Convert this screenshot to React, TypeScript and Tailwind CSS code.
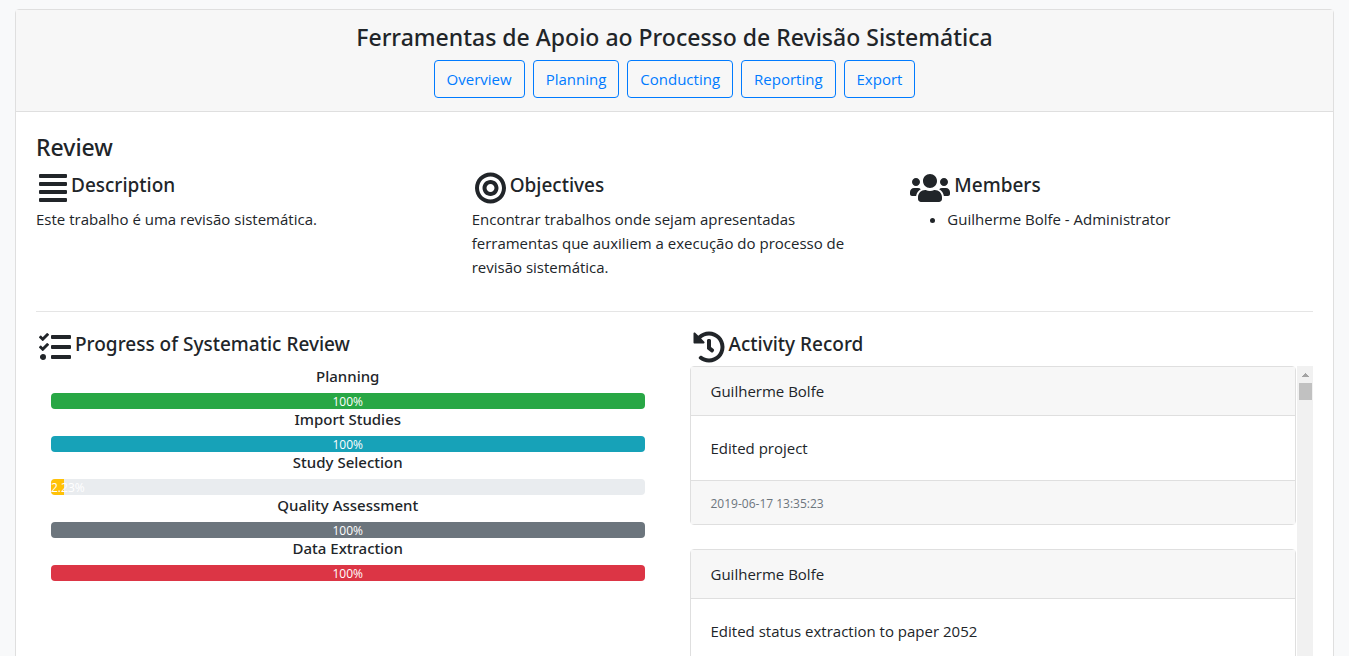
import type { ReactNode } from "react";
import { FaAlignJustify, FaBullseye, FaHistory, FaTasks, FaUsers } from "react-icons/fa";

const tabs = ["Overview", "Planning", "Conducting", "Reporting", "Export"];

const stages = [
  { label: "Planning", value: 100, color: "bg-[#28a745]" },
  { label: "Import Studies", value: 100, color: "bg-[#17a2b8]" },
  { label: "Study Selection", value: 2.23, color: "bg-[#ffc107]" },
  { label: "Quality Assessment", value: 100, color: "bg-[#6c757d]" },
  { label: "Data Extraction", value: 100, color: "bg-[#dc3545]" },
];

type Activity = { user: string; action: string; date?: string };

const activities: Activity[] = [
  { user: "Guilherme Bolfe", action: "Edited project", date: "2019-06-17 13:35:23" },
  { user: "Guilherme Bolfe", action: "Edited status extraction to paper 2052" },
];

function SectionTitle({ icon, children }: { icon: ReactNode; children: ReactNode }) {
  return (
    <div className="flex h-[38px] items-center gap-1 pl-[3px]">
      {icon}
      <h5 className="pb-1.5 font-['Noto_Sans',sans-serif] text-[19px] leading-6 font-medium">{children}</h5>
    </div>
  );
}

function Stage({ label, value, color }: (typeof stages)[number]) {
  return (
    <div>
      <h6 className="mb-1.5 text-center font-['Noto_Sans',sans-serif] text-[15px] leading-[21px] font-medium">
        {label}
      </h6>
      <div
        role="progressbar"
        aria-label={label}
        aria-valuenow={value}
        aria-valuemin={0}
        aria-valuemax={100}
        className="flex h-4 overflow-hidden rounded bg-[#e9ecef] text-xs leading-[18px] text-white"
      >
        <div className={`flex justify-center whitespace-nowrap ${color}`} style={{ width: `${value}%` }}>
          <span className={value < 10 ? "w-full" : ""}>{value}%</span>
        </div>
      </div>
    </div>
  );
}

function ActivityCard({ user, action, date }: Activity) {
  return (
    <article className="rounded border border-[#dfdfdf] bg-white">
      <div className="border-b border-[#dfdfdf] bg-[#f7f7f7] px-5 py-3">{user}</div>
      <p className="p-5">{action}</p>
      {date && (
        <div className="border-t border-[#dfdfdf] bg-[#f7f7f7] px-5 pt-[13px] pb-2.5 text-xs leading-5 text-[#6c757d]">
          {date}
        </div>
      )}
    </article>
  );
}

export default function App() {
  return (
    <div className="min-h-screen bg-[#f8f9fa] px-[15px] pt-[9px] font-['Open_Sans','Noto_Sans',sans-serif] text-[15px] leading-6 text-[#212529]">
      <main className="rounded border border-[#dfdfdf] bg-white">
        <header className="border-b border-[#dfdfdf] bg-[#f7f7f7] pt-3 pb-[13px] text-center">
          <h4 className="mb-2 font-['Noto_Sans',sans-serif] text-[23px] leading-[30px] font-medium">
            Ferramentas de Apoio ao Processo de Revisão Sistemática
          </h4>
          <nav className="flex flex-wrap justify-center gap-2">
            {tabs.map((tab) => (
              <a
                key={tab}
                href={`#${tab.toLowerCase()}`}
                className="rounded border border-[#007bff] px-3 py-1.5 text-[#007bff]"
              >
                {tab}
              </a>
            ))}
          </nav>
        </header>

        <div className="p-5">
          <h4 className="mb-[7px] font-['Noto_Sans',sans-serif] text-[23px] leading-[30px] font-medium">Review</h4>
          <div className="grid grid-cols-3 gap-[30px]">
            <section>
              <SectionTitle icon={<FaAlignJustify className="h-8 w-7 shrink-0" />}>Description</SectionTitle>
              <p>Este trabalho é uma revisão sistemática.</p>
            </section>
            <section>
              <SectionTitle icon={<FaBullseye className="h-8 w-[31px] shrink-0" />}>Objectives</SectionTitle>
              <p>
                Encontrar trabalhos onde sejam apresentadas ferramentas que auxiliem a execução do processo de
                revisão sistemática.
              </p>
            </section>
            <section>
              <SectionTitle icon={<FaUsers className="h-8 w-10 shrink-0" />}>Members</SectionTitle>
              <ul className="list-disc pl-10">
                <li>Guilherme Bolfe - Administrator</li>
              </ul>
            </section>
          </div>

          <hr className="mt-8 mb-4 border-[#e5e5e5]" />

          <div className="grid grid-cols-2 gap-[30px]">
            <section>
              <SectionTitle icon={<FaTasks className="size-8 shrink-0" />}>
                Progress of Systematic Review
              </SectionTitle>
              <div className="px-[15px]">
                {stages.map((stage) => (
                  <Stage key={stage.label} {...stage} />
                ))}
              </div>
            </section>

            <section>
              <SectionTitle icon={<FaHistory className="size-8 shrink-0" />}>Activity Record</SectionTitle>
              <div className="flex gap-px">
                <div className="flex flex-1 flex-col gap-6">
                  {activities.map((activity) => (
                    <ActivityCard key={activity.action} {...activity} />
                  ))}
                </div>
                <div aria-hidden="true" className="flex w-4 flex-col bg-[#f1f1f1] pr-px pl-0.5">
                  <svg viewBox="0 0 13 17" className="h-[17px]" shapeRendering="crispEdges">
                    <path d="M3 11V10H4V9H5V8H6V7H7V8H8V9H9V10H10V11Z" fill="#a3a3a3" />
                  </svg>
                  <div className="h-[17px] bg-[#c1c1c1]" />
                </div>
              </div>
            </section>
          </div>
        </div>
      </main>
    </div>
  );
}
